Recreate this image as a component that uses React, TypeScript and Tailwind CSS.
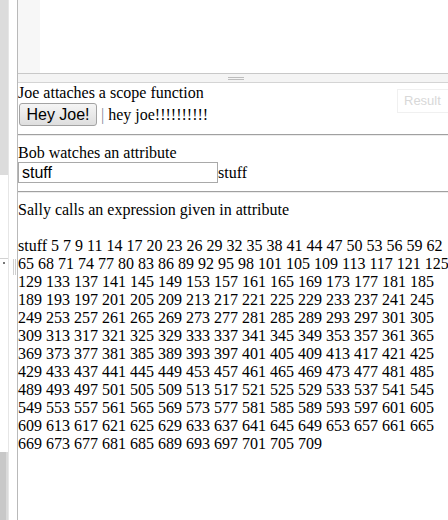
import React from "react";

const nums: number[] = [5, 7, 9];
for (let n = 11; n <= 101; n += 3) nums.push(n);
for (let n = 105; n <= 709; n += 4) nums.push(n);
const numberText = "stuff " + nums.join(" ");

export default function App() {
  return (
    <div className="w-[448px] h-[520px] overflow-hidden flex bg-white">
      {/* left strip */}
      <div className="w-[9px] shrink-0 flex flex-col border-r border-[#e6e6e6]">
        <div className="h-[175px] bg-[#dcdcdc]" />
        <div className="h-[83px] bg-white" />
        <div className="h-[194px] border-t border-[#d2d2d2] bg-white pt-[3px] pl-[3px]">
          <div className="w-[2px] h-[2px] bg-[#777]" />
        </div>
        <div className="flex-1 flex">
          <div className="w-[6px] bg-[#c8c8c8]" />
          <div className="w-[2px] bg-[#dadada]" />
        </div>
      </div>
      <div className="w-[8px] shrink-0 pt-[259px] pl-[4px] flex gap-[1px]">
        <div className="w-px h-[16px] bg-[#cfcfcf]" />
        <div className="w-px h-[16px] bg-[#cfcfcf]" />
      </div>
      {/* main column */}
      <div className="w-[470px] shrink-0 flex flex-col border-l border-[#b9b9b9]">
        {/* editor */}
        <div className="h-[74px] shrink-0 flex border-b border-[#c8c8c8]">
          <div className="w-[22px] bg-[#f7f7f7]" />
          <div className="flex-1 bg-white" />
        </div>
        {/* splitter */}
        <div className="h-[8px] shrink-0 bg-[#f4f4f4] pt-[3px] pl-[210px] flex flex-col gap-[1px]">
          <div className="w-[16px] h-px bg-[#bdbdbd]" />
          <div className="w-[16px] h-px bg-[#bdbdbd]" />
        </div>
        {/* result */}
        <div className="relative flex-1 border-t border-[#d4d4d4] bg-white">
          <div className="absolute top-[6px] left-[379px] w-[60px] h-[24px] border border-[#f0f0f0] bg-white pl-[6px] pt-[3px] text-[13px] leading-[15px] text-[#d8d8d8] font-['Liberation_Sans',Arial,sans-serif]">
            Result
          </div>
          <div className="w-[438px] pt-px text-[16px] leading-[normal] text-black font-['Liberation_Serif','Times_New_Roman',serif]">
            <div>Joe attaches a scope function</div>
            <div className="mt-px">
              <button className="ml-px w-[78px] h-[23px] align-baseline border border-[#a3a3a3] rounded-[3px] bg-gradient-to-b from-[#f5f5f5] to-[#dedede] text-[16px] leading-[normal] text-black font-['Liberation_Sans',Arial,sans-serif]">
                Hey Joe!
              </button>{" "}
              <span className="text-[#7a8a99]">|</span> hey joe!!!!!!!!!!
            </div>
            <hr className="my-2 border-t border-b border-t-[#a0a0a0] border-b-[#ececec]" />
            <div>Bob watches an attribute</div>
            <div>
              <input
                readOnly
                value="stuff"
                className="w-[200px] h-[21px] align-baseline border border-[#a9a9a9] px-[3px] py-0 text-[16px] leading-[normal] text-black font-['Liberation_Sans',Arial,sans-serif] outline-none"
              />
              stuff
            </div>
            <hr className="my-2 border-t border-b border-t-[#a0a0a0] border-b-[#ececec]" />
            <div>Sally calls an expression given in attribute</div>
            <p className="mt-[18px]">{numberText}</p>
          </div>
        </div>
      </div>
    </div>
  );
}
